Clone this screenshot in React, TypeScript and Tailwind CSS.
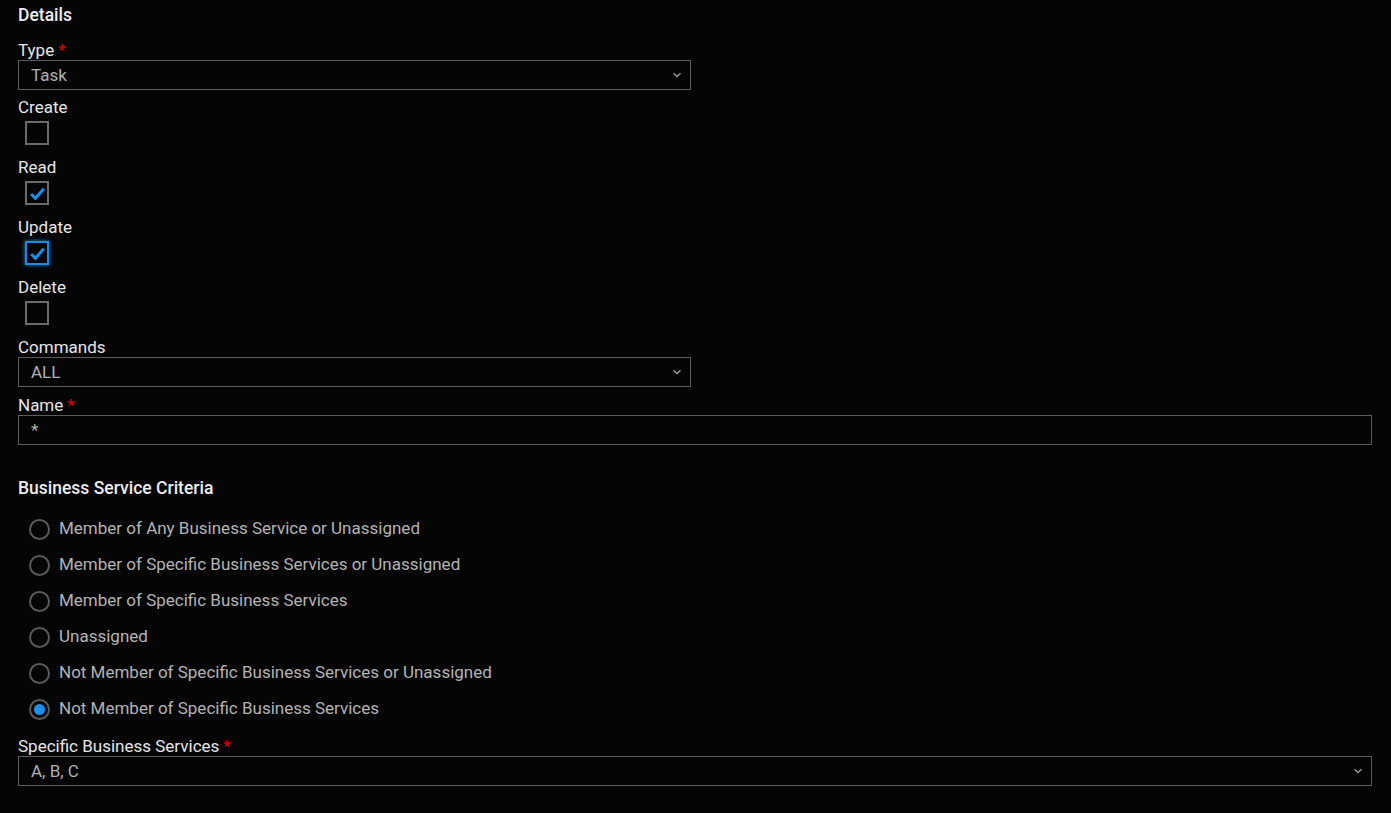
import React from "react";

const font = { fontFamily: "Roboto, 'Noto Sans', sans-serif" };

function Label({ text, required }: { text: string; required?: boolean }) {
  return (
    <div className="h-5 text-[17px] leading-5 text-[#e6e6e6]">
      {text}
      {required && <span className="ml-1 text-[#e00000]">*</span>}
    </div>
  );
}

function Chevron() {
  return (
    <svg width="10" height="6" viewBox="0 0 10 6" className="text-[#9a9a9a]">
      <path d="M1.5 1.2 5 4.6 8.5 1.2" fill="none" stroke="currentColor" strokeWidth="1.4" />
    </svg>
  );
}

function Select({ value, wide }: { value: string; wide?: boolean }) {
  return (
    <div
      className={`flex h-[30px] items-center justify-between border border-[#5c5c5c] pl-3 pr-2 text-[17px] text-[#b0b0b0] ${
        wide ? "w-full" : "w-[673px]"
      }`}
    >
      <span className="pt-0.5">{value}</span>
      <Chevron />
    </div>
  );
}

function Checkbox({ checked, focused }: { checked?: boolean; focused?: boolean }) {
  return (
    <div
      className={`ml-[7px] mt-1 flex h-6 w-6 items-center justify-center border-2 ${
        focused ? "border-[#1e88e5] shadow-[0_0_4px_#1e88e5]" : "border-[#6a6a6a]"
      }`}
    >
      {checked && (
        <svg width="17" height="15" viewBox="0 0 16 14">
          <path d="M2 7.5 6 11.5 14 2.5" fill="none" stroke="#1e8fe8" strokeWidth="2.8" />
        </svg>
      )}
    </div>
  );
}

function CheckField({ label, checked, focused }: { label: string; checked?: boolean; focused?: boolean }) {
  return (
    <div className="mt-3">
      <Label text={label} />
      <Checkbox checked={checked} focused={focused} />
    </div>
  );
}

function Radio({ label, selected }: { label: string; selected?: boolean }) {
  return (
    <div className="flex h-9 items-center">
      <div className="ml-[11px] flex h-[21px] w-[21px] items-center justify-center rounded-full border-2 border-[#5a5a5a]">
        {selected && <div className="h-[11px] w-[11px] rounded-full bg-[#1e8fe8]" />}
      </div>
      <span className="ml-[9px] text-[17px] text-[#b3b3b3]">{label}</span>
    </div>
  );
}

export default function App() {
  const options = [
    "Member of Any Business Service or Unassigned",
    "Member of Specific Business Services or Unassigned",
    "Member of Specific Business Services",
    "Unassigned",
    "Not Member of Specific Business Services or Unassigned",
    "Not Member of Specific Business Services",
  ];

  return (
    <div className="min-h-[813px] w-full bg-[#050505] pl-[18px] pr-[19px] pt-1" style={font}>
      <div className="h-[22px] text-[17.5px] font-medium leading-[22px] text-[#ececec]">Details</div>

      <div className="mt-[14px]">
        <Label text="Type" required />
        <Select value="Task" />
      </div>

      <div className="mt-[7px]">
        <Label text="Create" />
        <Checkbox />
      </div>
      <CheckField label="Read" checked />
      <CheckField label="Update" checked focused />
      <CheckField label="Delete" />

      <div className="mt-3">
        <Label text="Commands" />
        <Select value="ALL" />
      </div>

      <div className="mt-[8px]">
        <Label text="Name" required />
        <div className="flex h-[30px] w-full items-center border border-[#5c5c5c] pl-3 pt-0.5 text-[17px] text-[#b0b0b0]">
          *
        </div>
      </div>

      <div className="mt-[32px] h-[22px] text-[17.5px] font-medium leading-[22px] text-[#ececec]">
        Business Service Criteria
      </div>

      <div className="mt-[12px]">
        {options.map((o, i) => (
          <Radio key={o} label={o} selected={i === 5} />
        ))}
      </div>

      <div className="mt-[9px]">
        <Label text="Specific Business Services" required />
        <Select value="A, B, C" wide />
      </div>
    </div>
  );
}
